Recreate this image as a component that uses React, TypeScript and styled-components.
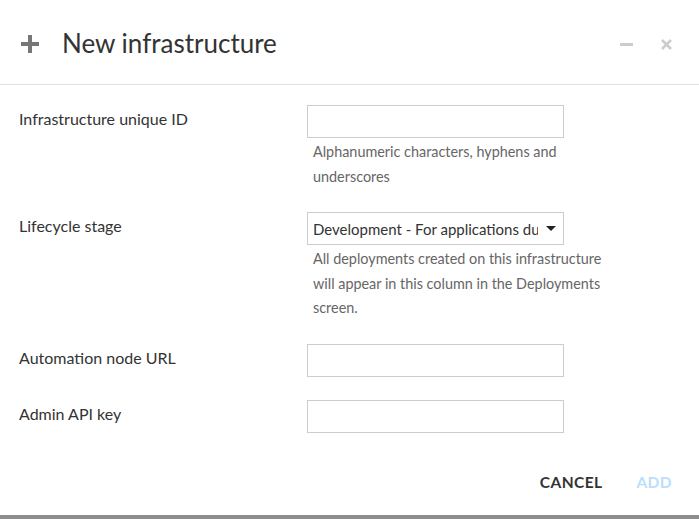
import { FC } from 'react'
import styled, { createGlobalStyle } from 'styled-components'

// ========================================================================
// Style
// ========================================================================

const GlobalStyle = createGlobalStyle`
  html, body {
    margin: 0;
    padding: 0;
    background: #fff;
  }
  body {
    font-family: Lato, "Noto Sans", sans-serif;
    color: #333;
  }
  * {
    box-sizing: border-box;
  }
`

const Dialog = styled.div`
  width: 699px;
  height: 519px;
  display: flex;
  flex-direction: column;
  background: #fff;
  border-bottom: 4px solid #8e8e8e;
`

const Header = styled.div`
  height: 85px;
  display: flex;
  align-items: center;
  padding: 4px 27px 0 21px;
  border-bottom: 1px solid #e0e0e0;
`

const Title = styled.h1`
  flex: 1;
  margin: 0 0 0 23px;
  font-size: 26px;
  font-weight: 400;
  color: #333;
  line-height: 1;
  padding-bottom: 2px;
`

const HeaderTools = styled.div`
  display: flex;
  align-items: center;
  gap: 28px;
`

const ToolButton = styled.button`
  border: none;
  background: none;
  padding: 0;
  display: flex;
  cursor: pointer;
`

const Body = styled.div`
  flex: 1;
  padding: 20px 0 0 19px;
  display: flex;
  flex-direction: column;
`

const Row = styled.div<{ $gap: number }>`
  display: grid;
  grid-template-columns: 288px 257px;
  margin-bottom: ${(p) => p.$gap}px;
`

const Label = styled.label`
  font-size: 16px;
  line-height: 28px;
  color: #333;
`

const Field = styled.div`
  display: flex;
  flex-direction: column;
`

const Input = styled.input`
  width: 257px;
  height: 33px;
  border: 1px solid #ccc;
  border-radius: 0;
  outline: none;
  padding: 0 6px;
  font: inherit;
  font-size: 14px;
`

const Select = styled.div`
  width: 257px;
  height: 33px;
  border: 1px solid #ccc;
  display: flex;
  align-items: center;
  padding: 0 7px 0 5px;
  gap: 8px;
  font-size: 15px;
  color: #333;
`

const SelectText = styled.span`
  flex: 1;
  white-space: nowrap;
  overflow: hidden;
`

const Caret = styled.span`
  flex: none;
  width: 0;
  height: 0;
  border-left: 5px solid transparent;
  border-right: 5px solid transparent;
  border-top: 5px solid #222;
`

const Help = styled.p`
  width: 292px;
  margin: 2px 0 0 6px;
  font-size: 14.4px;
  line-height: 24.5px;
  color: #666;
`

const Footer = styled.div`
  display: flex;
  justify-content: flex-end;
  align-items: center;
  gap: 34px;
  padding: 0 27px 24px 0;
`

const Action = styled.button<{ $disabled?: boolean }>`
  border: none;
  background: none;
  padding: 0;
  font-family: Lato, "Noto Sans", sans-serif;
  font-size: 15.5px;
  font-weight: 700;
  letter-spacing: 0.4px;
  color: ${(p) => (p.$disabled ? '#bbdefb' : '#333')};
  cursor: ${(p) => (p.$disabled ? 'default' : 'pointer')};
`

// ========================================================================
// View
// ========================================================================

const PlusIcon: FC = () => (
  <svg width="18" height="18" viewBox="0 0 18 18">
    <rect x="7" y="0" width="4" height="18" fill="#777" />
    <rect x="0" y="7" width="18" height="4" fill="#777" />
  </svg>
)

const App: FC = () => (
  <>
    <GlobalStyle />
    <Dialog>
      <Header>
        <PlusIcon />
        <Title>New infrastructure</Title>
        <HeaderTools>
          <ToolButton aria-label="minimize">
            <svg width="13" height="13" viewBox="0 0 13 13">
              <rect x="0" y="5" width="13" height="3" fill="#ccc" />
            </svg>
          </ToolButton>
          <ToolButton aria-label="close">
            <svg width="11" height="11" viewBox="0 0 11 11">
              <path d="M1 1L10 10M10 1L1 10" stroke="#ccc" strokeWidth="2.6" />
            </svg>
          </ToolButton>
        </HeaderTools>
      </Header>

      <Body>
        <Row $gap={23}>
          <Label>Infrastructure unique ID</Label>
          <Field>
            <Input />
            <Help>Alphanumeric characters, hyphens and underscores</Help>
          </Field>
        </Row>

        <Row $gap={23}>
          <Label>Lifecycle stage</Label>
          <Field>
            <Select>
              <SelectText>Development - For applications during development</SelectText>
              <Caret />
            </Select>
            <Help>
              All deployments created on this infrastructure will appear in this column in the
              Deployments screen.
            </Help>
          </Field>
        </Row>

        <Row $gap={23}>
          <Label>Automation node URL</Label>
          <Field>
            <Input />
          </Field>
        </Row>

        <Row $gap={0}>
          <Label>Admin API key</Label>
          <Field>
            <Input />
          </Field>
        </Row>
      </Body>

      <Footer>
        <Action>CANCEL</Action>
        <Action $disabled>ADD</Action>
      </Footer>
    </Dialog>
  </>
)

export default App
